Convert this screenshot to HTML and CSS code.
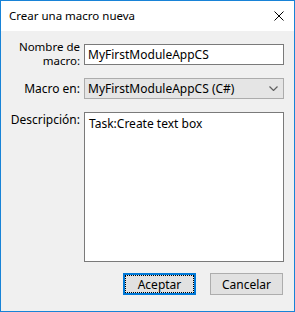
FILE: index.html
```html
<!DOCTYPE html>
<html lang="es">
<head>
  <meta charset="UTF-8">
  <title>Crear una macro nueva</title>
  <link rel="stylesheet" href="styles.css">
</head>
<body>
  <div class="dialog">
    <div class="titlebar">
      <span class="title">Crear una macro nueva</span>
      <svg class="close" width="10" height="10" viewBox="0 0 10 10">
        <path d="M0.5 0.5 L9.5 9.5 M9.5 0.5 L0.5 9.5" stroke="#000" stroke-width="1" fill="none"/>
      </svg>
    </div>
    <div class="content">
      <div class="form">
        <label class="label two-line">Nombre de<br>macro:</label>
        <input class="textbox" type="text" value="MyFirstModuleAppCS">

        <label class="label">Macro en:</label>
        <div class="combo">
          <span>MyFirstModuleAppCS (C#)</span>
          <svg width="9" height="5" viewBox="0 0 9 5">
            <path d="M0.5 0.5 L4.5 4.5 L8.5 0.5" stroke="#606060" stroke-width="1.2" fill="none"/>
          </svg>
        </div>

        <label class="label top">Descripción:</label>
        <textarea class="memo">Task:Create text box</textarea>
      </div>
      <div class="buttons">
        <button class="btn default"><span>Aceptar</span></button>
        <button class="btn"><span>Cancelar</span></button>
      </div>
    </div>
  </div>
</body>
</html>
```

FILE: styles.css
```css
body {
  margin: 0;
  font-family: "Noto Sans", "Open Sans", sans-serif;
  font-size: 12px;
  color: #000;
}
.dialog {
  width: 293px;
  height: 310px;
  border: 1px solid #1883d7;
  background-color: #f0f0f0;
  display: flex;
  flex-direction: column;
}
.titlebar {
  height: 30px;
  background-color: #fff;
  display: flex;
  align-items: center;
  justify-content: space-between;
  padding: 0 10px 0 8px;
}
.title {
  font-size: 11.5px;
  margin-top: -1px;
}
.content {
  padding: 13px 9px 0 0;
}
.form {
  display: grid;
  grid-template-columns: 79px 200px;
  grid-template-rows: 21px 21px 150px;
  column-gap: 4px;
  row-gap: 13px;
}
.label {
  text-align: right;
  align-self: center;
  line-height: 14px;
}
.label.two-line {
  font-size: 11.5px;
  line-height: 14px;
  margin-top: -1px;
}
.label.top {
  align-self: start;
  margin-top: 1px;
}
.textbox {
  box-sizing: border-box;
  width: 200px;
  height: 21px;
  margin: 0;
  border: 1px solid #7a7a7a;
  background-color: #fff;
  font-family: inherit;
  font-size: 12px;
  padding: 0 3px;
  color: #000;
  outline: none;
}
.combo {
  box-sizing: border-box;
  height: 21px;
  border: 1px solid #acacac;
  background-color: #e5e5e5;
  display: flex;
  align-items: center;
  justify-content: space-between;
  padding: 0 5px 0 3px;
}
.memo {
  box-sizing: border-box;
  width: 200px;
  height: 150px;
  margin: 0;
  border: 1px solid #7a7a7a;
  background-color: #fff;
  font-family: inherit;
  font-size: 12px;
  padding: 2px 4px;
  resize: none;
  outline: none;
  color: #000;
  overflow: hidden;
}
.buttons {
  display: flex;
  justify-content: flex-end;
  gap: 14px;
  margin-top: 11px;
  padding-right: 2px;
}
.btn {
  box-sizing: border-box;
  width: 73px;
  height: 22px;
  padding: 0;
  margin: 0;
  border: 1px solid #adadad;
  background-color: #e1e1e1;
  font-family: inherit;
  font-size: 12px;
  color: #000;
  display: flex;
}
.btn span {
  flex: 1;
  display: flex;
  align-items: center;
  justify-content: center;
  border: 1px solid transparent;
}
.btn.default {
  border: 2px solid #0078d7;
}
.btn.default span {
  border: 1px dotted #000;
}
```
